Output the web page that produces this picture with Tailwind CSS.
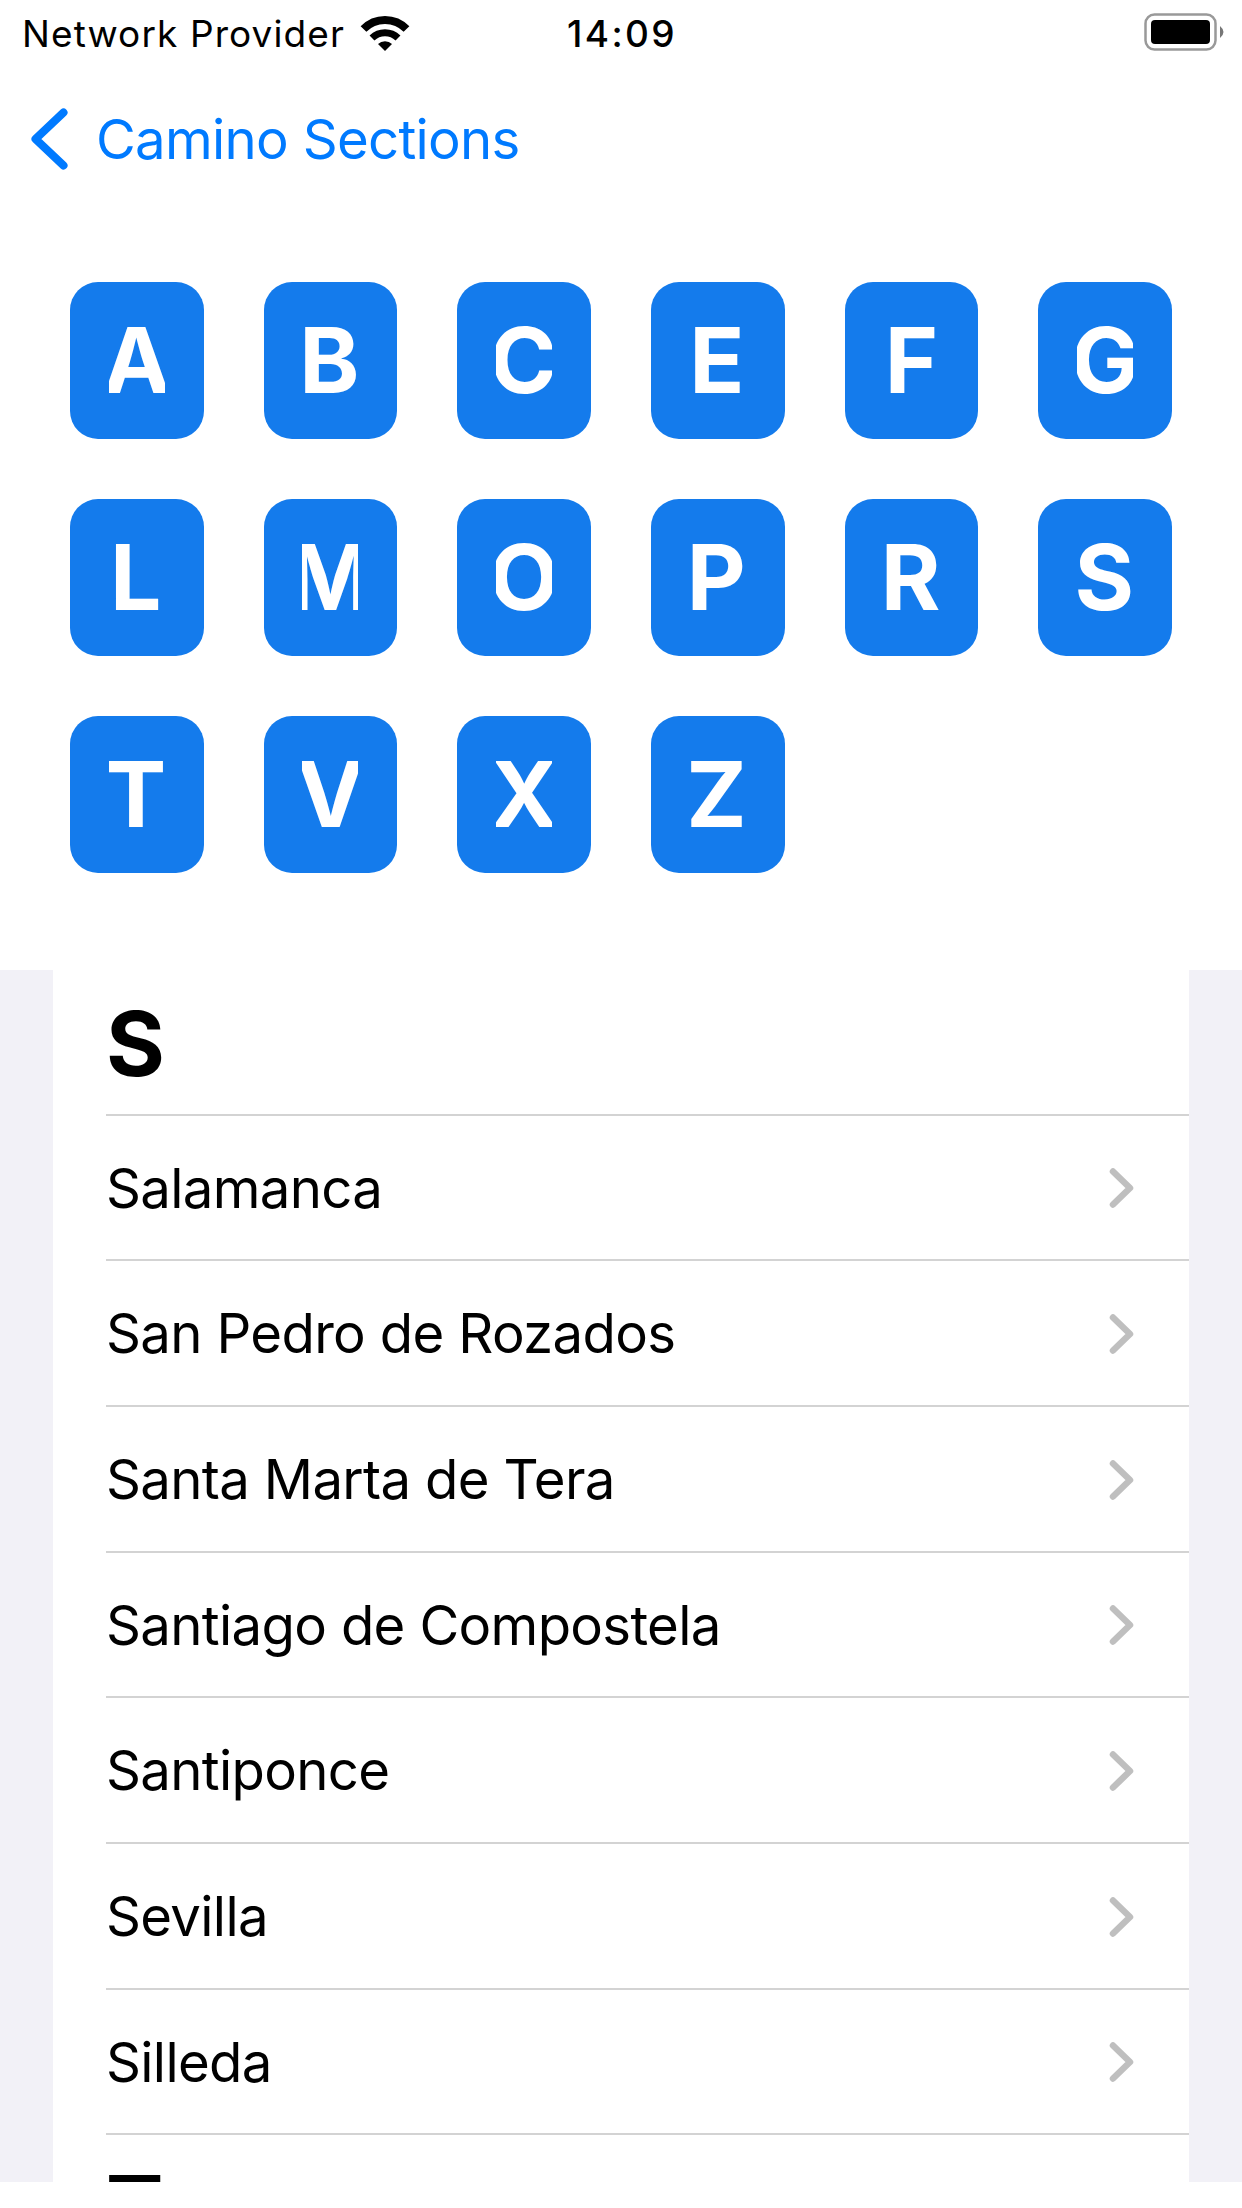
<!DOCTYPE html>
<html lang="en">
<head>
    <meta charset="UTF-8">
    <meta name="viewport" content="width=device-width, initial-scale=1.0">
    <title>Camino Sections</title>
    <script src="https://cdn.jsdelivr.net/npm/@tailwindcss/browser@4"></script>
</head>
<body class="bg-white text-black font-['Inter','Liberation_Sans',sans-serif] h-[2208px] overflow-hidden">
    <!-- Status bar -->
    <header class="grid grid-cols-3 h-[68px] pl-[22px] pr-[18px] text-[37px] leading-[68px]">
        <div class="flex">
            <span class="whitespace-nowrap tracking-[1.1px]">Network Provider</span>
            <svg class="ml-[15px] mt-[15px] shrink-0" width="50" height="37" viewBox="0 0 50 37">
                <path d="M3.500 14 A30 30 0 0 1 46.500 14" fill="none" stroke="#000" stroke-width="8"/>
                <path d="M12 23 A18.500 18.500 0 0 1 38 23" fill="none" stroke="#000" stroke-width="7"/>
                <path d="M25 36 L18 29 A10 10 0 0 1 32 29 Z"/>
            </svg>
        </div>
        <span class="text-center font-medium tracking-[2.4px] -ml-[2px]">14:09</span>
        <svg class="justify-self-end mt-3" width="81" height="40" viewBox="0 0 81 40">
            <rect x="2.500" y="2.500" width="70" height="35" rx="9" fill="none" stroke="#999" stroke-width="2.500"/>
            <rect x="8" y="8" width="59" height="24" rx="4"/>
            <path d="M77 14 Q84 20 77 26 Z" fill="#777"/>
        </svg>
    </header>

    <nav class="flex items-center h-[142px] pl-[30px] text-[#007aff]">
        <svg class="mr-[27px]" width="39" height="64" viewBox="0 0 39 64">
            <path d="M33.500 5.500 L5.500 32 L33.500 58.500" fill="none" stroke="currentColor" stroke-width="8" stroke-linecap="round" stroke-linejoin="round"/>
        </svg>
        <a href="#" class="pt-[2px] text-[54.500px] tracking-[-0.7px]">Camino Sections</a>
    </nav>

    <!-- Letter index -->
    <section class="grid grid-cols-6 gap-x-[60.2px] gap-y-[60px] h-[760px] content-start pt-[71.500px] pl-[70px] pr-[70px] text-[91px] font-bold text-white leading-[157px]">
        <a href="#" class="flex justify-center h-[157px] rounded-[28px] bg-[#147bec]"><span class="flex justify-center w-[56px] overflow-hidden">A</span></a>
        <a href="#" class="flex justify-center h-[157px] rounded-[28px] bg-[#147bec]"><span class="flex justify-center w-[56px] overflow-hidden pr-[2px]">B</span></a>
        <a href="#" class="flex justify-center h-[157px] rounded-[28px] bg-[#147bec]"><span class="flex justify-center w-[56px] overflow-hidden pr-[2px]">C</span></a>
        <a href="#" class="flex justify-center h-[157px] rounded-[28px] bg-[#147bec]"><span class="flex justify-center w-[56px] overflow-hidden pr-[2px]">E</span></a>
        <a href="#" class="flex justify-center h-[157px] rounded-[28px] bg-[#147bec]"><span class="flex justify-center w-[56px] overflow-hidden">F</span></a>
        <a href="#" class="flex justify-center h-[157px] rounded-[28px] bg-[#147bec]"><span class="flex justify-center w-[56px] overflow-hidden">G</span></a>
        <a href="#" class="flex justify-center h-[157px] rounded-[28px] bg-[#147bec]"><span class="flex justify-center w-[56px] overflow-hidden pr-[2px]">L</span></a>
        <a href="#" class="flex justify-center h-[157px] rounded-[28px] bg-[#147bec]"><span class="flex justify-center w-[56px] overflow-hidden">M</span></a>
        <a href="#" class="flex justify-center h-[157px] rounded-[28px] bg-[#147bec]"><span class="flex justify-center w-[56px] overflow-hidden">O</span></a>
        <a href="#" class="flex justify-center h-[157px] rounded-[28px] bg-[#147bec]"><span class="flex justify-center w-[56px] overflow-hidden pr-[3px]">P</span></a>
        <a href="#" class="flex justify-center h-[157px] rounded-[28px] bg-[#147bec]"><span class="flex justify-center w-[56px] overflow-hidden pr-[2px]">R</span></a>
        <a href="#" class="flex justify-center h-[157px] rounded-[28px] bg-[#147bec]"><span class="flex justify-center w-[56px] overflow-hidden pr-[2px]">S</span></a>
        <a href="#" class="flex justify-center h-[157px] rounded-[28px] bg-[#147bec]"><span class="flex justify-center w-[56px] overflow-hidden pr-[2px]">T</span></a>
        <a href="#" class="flex justify-center h-[157px] rounded-[28px] bg-[#147bec]"><span class="flex justify-center w-[56px] overflow-hidden">V</span></a>
        <a href="#" class="flex justify-center h-[157px] rounded-[28px] bg-[#147bec]"><span class="flex justify-center w-[56px] overflow-hidden">X</span></a>
        <a href="#" class="flex justify-center h-[157px] rounded-[28px] bg-[#147bec]"><span class="flex justify-center w-[56px] overflow-hidden pr-[3px]">Z</span></a>
    </section>

    <!-- Town list -->
    <main class="h-[1212px] px-[53px] bg-[#f2f1f7] overflow-hidden">
        <div class="h-[1212px] pl-[53px] bg-white overflow-hidden text-[54.500px] tracking-[-0.66px]">
            <h2 class="h-[145.670px] border-b-2 border-[#d3d3d3] text-[90px] leading-[147px] font-bold">S</h2>
            <div class="flex items-center justify-between h-[145.670px] border-b-2 border-[#d3d3d3] pt-[2px] pr-[54px]">
                <span>Salamanca</span>
                <svg width="27" height="42" viewBox="0 0 27 42"><path d="M5 4.500 L22 21 L5 37.500" fill="none" stroke="#bfbfbf" stroke-width="6.500" stroke-linecap="round" stroke-linejoin="round"/></svg>
            </div>
            <div class="flex items-center justify-between h-[145.670px] border-b-2 border-[#d3d3d3] pt-[2px] pr-[54px]">
                <span>San Pedro de Rozados</span>
                <svg width="27" height="42" viewBox="0 0 27 42"><path d="M5 4.500 L22 21 L5 37.500" fill="none" stroke="#bfbfbf" stroke-width="6.500" stroke-linecap="round" stroke-linejoin="round"/></svg>
            </div>
            <div class="flex items-center justify-between h-[145.670px] border-b-2 border-[#d3d3d3] pt-[2px] pr-[54px]">
                <span>Santa Marta de Tera</span>
                <svg width="27" height="42" viewBox="0 0 27 42"><path d="M5 4.500 L22 21 L5 37.500" fill="none" stroke="#bfbfbf" stroke-width="6.500" stroke-linecap="round" stroke-linejoin="round"/></svg>
            </div>
            <div class="flex items-center justify-between h-[145.670px] border-b-2 border-[#d3d3d3] pt-[2px] pr-[54px]">
                <span>Santiago de Compostela</span>
                <svg width="27" height="42" viewBox="0 0 27 42"><path d="M5 4.500 L22 21 L5 37.500" fill="none" stroke="#bfbfbf" stroke-width="6.500" stroke-linecap="round" stroke-linejoin="round"/></svg>
            </div>
            <div class="flex items-center justify-between h-[145.670px] border-b-2 border-[#d3d3d3] pt-[2px] pr-[54px]">
                <span>Santiponce</span>
                <svg width="27" height="42" viewBox="0 0 27 42"><path d="M5 4.500 L22 21 L5 37.500" fill="none" stroke="#bfbfbf" stroke-width="6.500" stroke-linecap="round" stroke-linejoin="round"/></svg>
            </div>
            <div class="flex items-center justify-between h-[145.670px] border-b-2 border-[#d3d3d3] pt-[2px] pr-[54px]">
                <span>Sevilla</span>
                <svg width="27" height="42" viewBox="0 0 27 42"><path d="M5 4.500 L22 21 L5 37.500" fill="none" stroke="#bfbfbf" stroke-width="6.500" stroke-linecap="round" stroke-linejoin="round"/></svg>
            </div>
            <div class="flex items-center justify-between h-[145.670px] border-b-2 border-[#d3d3d3] pt-[2px] pr-[54px]">
                <span>Silleda</span>
                <svg width="27" height="42" viewBox="0 0 27 42"><path d="M5 4.500 L22 21 L5 37.500" fill="none" stroke="#bfbfbf" stroke-width="6.500" stroke-linecap="round" stroke-linejoin="round"/></svg>
            </div>
            <h2 class="h-[145.670px] text-[86px] leading-[145px] font-bold">T</h2>
        </div>
    </main>
</body>
</html>
